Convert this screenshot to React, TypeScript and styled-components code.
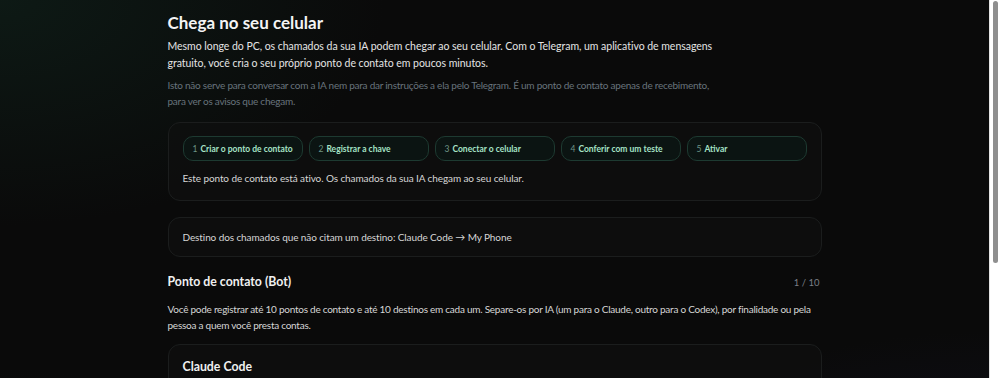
import React from "react";
import styled, { createGlobalStyle } from "styled-components";

const Global = createGlobalStyle`
  html, body { margin: 0; padding: 0; }
  body {
    background: #0a0a0a;
    font-family: Lato, "Open Sans", "Noto Sans", sans-serif;
    color: #e6e6e6;
  }
  ::-webkit-scrollbar { display: none; width: 0; }
`;

const Page = styled.div`
  min-height: 100vh;
  box-sizing: border-box;
  background:
    radial-gradient(ellipse 55% 60% at 0% 0%, rgba(16, 38, 30, 0.55), rgba(10, 10, 10, 0) 70%),
    radial-gradient(ellipse 60% 55% at 100% 100%, rgba(24, 22, 48, 0.6), rgba(10, 10, 10, 0) 70%),
    radial-gradient(ellipse 45% 45% at 0% 100%, rgba(14, 26, 26, 0.45), rgba(10, 10, 10, 0) 70%),
    #0a0a0a;
  padding: 12px 11px 40px 0;
`;

const ScrollTrack = styled.div`
  position: fixed;
  z-index: 50;
  top: 0;
  bottom: 0;
  right: 0;
  width: 11px;
  background: #ffffff;
  border-left: 1px solid #e2e2e2;
  box-sizing: border-box;
  display: flex;
  justify-content: center;
  align-items: flex-start;
  padding-top: 1px;
`;

const ScrollThumb = styled.div`
  width: 5px;
  height: 262px;
  border-radius: 3px;
  background: #8f8f8f;
`;

const Container = styled.main`
  max-width: 654px;
  margin: 0 auto;
`;

const Title = styled.h1`
  margin: 0;
  font-size: 17px;
  line-height: 22px;
  font-weight: 700;
  color: #f4f4f4;
`;

const Lead = styled.p`
  margin: 4px 0 0;
  font-size: 10.5px;
  letter-spacing: -0.03px;
  line-height: 17px;
  color: #e4e4e4;
`;

const Muted = styled.p`
  margin: 5px 0 0;
  font-size: 10px;
  letter-spacing: -0.25px;
  line-height: 16px;
  color: #68737c;
`;

const Card = styled.section<{ $mt?: number; $pad?: string }>`
  margin-top: ${(p) => p.$mt ?? 0}px;
  padding: ${(p) => p.$pad ?? "13px 14px"};
  border: 1px solid #1b1d1d;
  border-radius: 12px;
  background: rgba(16, 17, 17, 0.55);
`;

const Steps = styled.div`
  display: flex;
  gap: 6px;
`;

const Step = styled.div`
  box-sizing: border-box;
  width: 120px;
  height: 25px;
  display: flex;
  align-items: center;
  gap: 3px;
  padding: 0 9px;
  border: 1px solid #1d3a31;
  border-radius: 10px;
  background: #0b1412;
  font-size: 8.5px;
  font-weight: 700;
  color: #a6e3c6;
  white-space: nowrap;
`;

const StepNum = styled.span`
  color: #6e9586;
  font-weight: 400;
`;

const BodyText = styled.p<{ $mt?: number; $tight?: boolean }>`
  margin: ${(p) => p.$mt ?? 0}px 0 0;
  font-size: 10px;
  letter-spacing: ${(p) => (p.$tight ? "-0.25px" : "-0.1px")};
  line-height: 16px;
  color: #d6d6d6;
`;

const SectionHead = styled.div`
  margin-top: 16px;
  display: flex;
  align-items: center;
  justify-content: space-between;
`;

const SectionTitle = styled.h2`
  margin: 0;
  font-size: 12.3px;
  line-height: 18px;
  font-weight: 700;
  color: #f0f0f0;
`;

const Counter = styled.span`
  font-size: 9.5px;
  color: #7b7f86;
  margin-right: 2px;
`;

const CardTitle = styled.h3`
  margin: 0;
  font-size: 12.3px;
  line-height: 18px;
  font-weight: 700;
  color: #f0f0f0;
`;

const steps = [
  "Criar o ponto de contato",
  "Registrar a chave",
  "Conectar o celular",
  "Conferir com um teste",
  "Ativar",
];

export default function App() {
  return (
    <>
      <Global />
      <Page>
        <Container>
          <Title>Chega no seu celular</Title>
          <Lead>
            Mesmo longe do PC, os chamados da sua IA podem chegar ao seu celular. Com o Telegram, um aplicativo de mensagens
            <br />
            gratuito, você cria o seu próprio ponto de contato em poucos minutos.
          </Lead>
          <Muted>
            Isto não serve para conversar com a IA nem para dar instruções a ela pelo Telegram. É um ponto de contato apenas de recebimento,
            <br />
            para ver os avisos que chegam.
          </Muted>

          <Card $mt={13} $pad="13px 14px 14px">
            <Steps>
              {steps.map((s, i) => (
                <Step key={s}>
                  <StepNum>{i + 1}</StepNum>
                  {s}
                </Step>
              ))}
            </Steps>
            <BodyText $mt={9}>
              Este ponto de contato está ativo. Os chamados da sua IA chegam ao seu celular.
            </BodyText>
          </Card>

          <Card $mt={16} $pad="11px 14px 11px">
            <BodyText>Destino dos chamados que não citam um destino: Claude Code → My Phone</BodyText>
          </Card>

          <SectionHead>
            <SectionTitle>Ponto de contato (Bot)</SectionTitle>
            <Counter>1 / 10</Counter>
          </SectionHead>
          <BodyText $mt={10} $tight>
            Você pode registrar até 10 pontos de contato e até 10 destinos em cada um. Separe-os por IA (um para o Claude, outro para o Codex), por finalidade ou pela
            <br />
            pessoa a quem você presta contas.
          </BodyText>

          <Card $mt={11} $pad="13px 14px 120px">
            <CardTitle>Claude Code</CardTitle>
          </Card>
        </Container>
      </Page>
      <ScrollTrack>
        <ScrollThumb />
      </ScrollTrack>
    </>
  );
}
